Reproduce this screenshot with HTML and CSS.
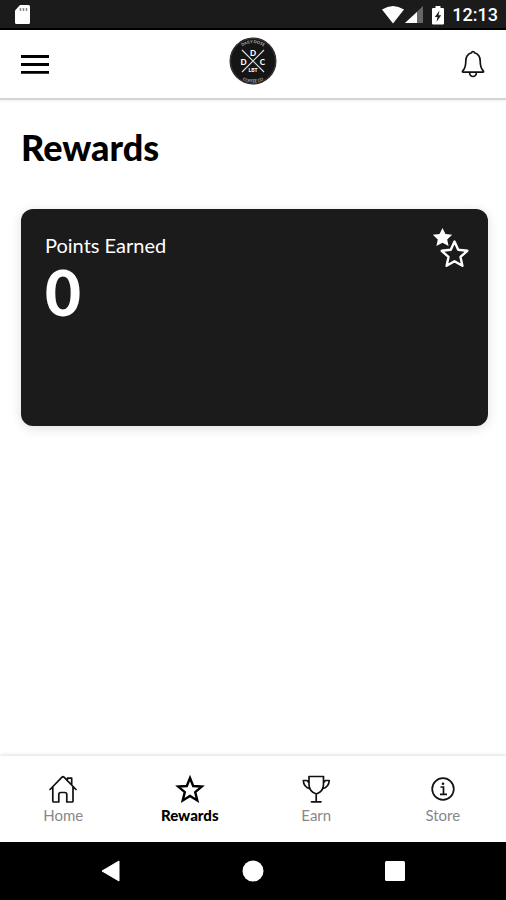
FILE: index.html
```html
<!DOCTYPE html>
<html lang="en">
<head>
<meta charset="utf-8">
<meta name="viewport" content="width=device-width, initial-scale=1">
<title>Rewards</title>
<link rel="stylesheet" href="styles.css">
</head>
<body>
<div class="status">
  <svg class="sd" width="18" height="20" viewBox="0 0 18 20" aria-hidden="true"><path d="M7 0h8.500q1.500 0 1.500 1.500v16q0 1.500-1.500 1.500h-12q-1.500 0-1.500-1.500V5.500z" fill="#fff"/><path d="M7.500 3v3M10.500 3v3M13.500 3v3" stroke="#888" stroke-width="1.500"/></svg>
  <div class="status-right">
    <svg width="22" height="18" viewBox="0 0 22 18" aria-hidden="true"><path d="M0 3.500Q11-3.500 22 3.500L11 17.500z" fill="#fff"/></svg>
    <svg class="signal" width="18" height="18" viewBox="0 0 18 18" aria-hidden="true"><path d="M18 0v17H0z" fill="#666"/><path d="M12 6v11H0z" fill="#fff"/></svg>
    <svg class="battery" width="12" height="19" viewBox="0 0 12 19" aria-hidden="true"><path d="M3.500 0h5v2H11q1 0 1 1v14.500q0 1-1 1H1q-1 0-1-1V3q0-1 1-1h2.500z" fill="#fff"/><path d="M7.500 4.500L2.800 11h2.700l-1 5L9.200 9.300H6.500z" fill="#1c1b1c"/></svg>
    <span class="clock">12:13</span>
  </div>
</div>
<header class="header">
  <button class="icon-button menu" aria-label="Menu"><svg width="28" height="20" viewBox="0 0 28 20"><path d="M0 2.500h28M0 10.500h28M0 18.300h28" stroke="#000" stroke-width="2.800"/></svg></button>
  <svg class="logo" width="48" height="48" viewBox="0 0 48 48" role="img" aria-label="Daily Dose Coffee Co">
    <defs><path id="arc-top" d="M6 24a18 18 0 0 1 36 0"/><path id="arc-bottom" d="M2.500 24a21.500 21.500 0 0 0 43 0"/></defs>
    <circle cx="24" cy="24" r="23.500" fill="#151515"/>
    <circle cx="24" cy="24" r="22.500" fill="none" stroke="#555" stroke-width=".6"/>
    <path d="M13 13l22 22M35 13L13 35" stroke="#ddd" stroke-width="1.200"/>
    <g class="logo-ring"><text><textPath href="#arc-top" startOffset="50%">DAILY DOSE</textPath></text><text><textPath href="#arc-bottom" startOffset="50%">COFFEE CO</textPath></text></g>
    <g class="logo-letters"><text x="24" y="19">D</text><text x="14.500" y="27.500">D</text><text x="33.500" y="27.500">C</text><text class="logo-small" x="24" y="35">LBT</text></g>
  </svg>
  <button class="icon-button bell" aria-label="Notifications"><svg width="24" height="28" viewBox="0 0 24 28" fill="none" stroke="#111" stroke-width="1.700" stroke-linejoin="round"><path d="M12 1.500c-.8 0-1.400.6-1.500 1.300C6.700 4 4.800 7 4.800 11c0 5.500-1.200 8-3 9.700q-1 1.300.5 1.500h19.400q1.500-.2.500-1.500c-1.800-1.700-3-4.200-3-9.700 0-4-1.900-7-5.700-8.200C13.400 2.100 12.800 1.500 12 1.500z"/><path d="M8.500 22.500q.5 4 3.500 4t3.500-4"/></svg></button>
</header>
<main class="main">
  <h1 class="title">Rewards</h1>
  <section class="card">
    <div><h2 class="card-label">Points Earned</h2><p class="points">0</p></div>
    <svg class="stars" width="38" height="42" viewBox="0 0 38 42" aria-hidden="true"><path d="M10.500 0l3 6 6.700.8-5 4.600 1.400 6.600-6.100-3.300L4.400 18l1.400-6.600-5-4.600 6.700-.8z" fill="#fff"/><path d="M22.500 13.500l3.700 8.300 9.100 1-6.800 6.100 1.900 8.900-7.900-4.600-7.900 4.600 1.900-8.900-6.800-6.100 9.100-1z" fill="#1c1b1c" stroke="#fff" stroke-width="2.400" stroke-linejoin="round"/></svg>
  </section>
</main>
<nav class="tabs" aria-label="Main">
  <a class="tab" href="#home"><svg width="30" height="30" viewBox="0 0 30 30" fill="none" stroke="#111" stroke-width="1.700" stroke-linejoin="round" stroke-linecap="round"><path d="M2 15.500L14 3.200q1-.9 2 0L28 15.500M4.800 13v14q0 1 1 1h5V20.500q0-2 2-2h4q2 0 2 2V28h5.200q1 0 1-1V13M19.500 6V4.200h4.200V11"/></svg><span>Home</span></a>
  <a class="tab active" href="#rewards" aria-current="page"><svg width="30" height="30" viewBox="0 0 30 30"><path d="M15 4l3.200 8 8.600.600-6.600 5.500 2.100 8.400L15 22l-7.300 4.500 2.100-8.400-6.600-5.500 8.600-.600z" fill="none" stroke="#000" stroke-width="2.400"/></svg><span>Rewards</span></a>
  <a class="tab" href="#earn"><svg width="30" height="30" viewBox="0 0 30 30" fill="none" stroke="#111" stroke-width="1.700" stroke-linejoin="round" stroke-linecap="round"><path d="M8 2.500h14.500v8q0 7-7.200 9.500Q8 17.500 8 10.500zM15.200 20v7.500M10.500 27.800h9.500M7.700 8.300L6 6.500H2.300q.3 6.500 6.500 8.300M22.800 8.300l1.700-1.800h3.700q-.3 6.500-6.500 8.300"/></svg><span>Earn</span></a>
  <a class="tab" href="#store"><svg width="30" height="30" viewBox="0 0 30 30" fill="none" stroke="#111"><circle cx="15" cy="15" r="10.800" stroke-width="1.700"/><path d="M12.500 13h3v7M12 20.300h7" stroke-width="1.700"/><circle cx="15" cy="9.700" r="1.300" fill="#111" stroke="none"/></svg><span>Store</span></a>
</nav>
<div class="system">
  <button class="icon-button" aria-label="Back"><svg width="20" height="22" viewBox="0 0 20 22"><path d="M1 11L18 1v20z" fill="#fff" stroke="#fff" stroke-linejoin="round"/></svg></button>
  <button class="icon-button" aria-label="Home screen"><svg width="22" height="22" viewBox="0 0 22 22"><circle cx="11" cy="11" r="10.500" fill="#fff"/></svg></button>
  <button class="icon-button" aria-label="Recent apps"><svg width="20" height="20" viewBox="0 0 20 20"><rect width="20" height="20" rx="1.500" fill="#fff"/></svg></button>
</div>
</body>
</html>
```
FILE: styles.css
```css
* {
  box-sizing: border-box;
}

body {
  margin: 0;
  min-height: 100vh;
  display: flex;
  flex-direction: column;
  background: #fff;
  color: #000;
  font-family: Lato, sans-serif;
}

svg {
  display: block;
}

.status {
  height: 30px;
  padding: 2px 8px 0 13px;
  display: flex;
  align-items: center;
  justify-content: space-between;
  background: #1c1b1c;
  border-bottom: 2px solid #000;
}

.status-right {
  display: flex;
  align-items: center;
}

.signal {
  margin-left: 1px;
}

.battery {
  margin: 0 8px 0 9px;
}

.clock {
  color: #fff;
  font: 500 18px/26px Roboto, sans-serif;
}

.header {
  height: 70px;
  padding: 0 21px;
  display: grid;
  grid-template-columns: 1fr auto 1fr;
  align-items: center;
  border-bottom: 2px solid #d4d4d4;
  box-shadow: 0 1px 3px #0001;
}

.icon-button {
  padding: 0;
  border: 0;
  background: none;
  cursor: pointer;
}

.menu {
  justify-self: start;
}

.bell {
  justify-self: end;
}

.logo {
  margin-bottom: 6px;
}

.logo-ring {
  fill: #bbb;
  font-size: 4px;
  font-weight: 700;
  text-anchor: middle;
}

.logo-letters {
  fill: #fff;
  font-size: 8px;
  font-weight: 900;
  text-anchor: middle;
}

.logo-small {
  font-size: 5px;
}

.main {
  flex: 1;
  padding: 23px 18px 24px 21px;
}

.title {
  margin: 0 0 38px;
  font-size: 36px;
  line-height: 48px;
  font-weight: 900;
}

.card {
  display: flex;
  min-height: 217px;
  padding: 19px 18px 24px 24px;
  justify-content: space-between;
  align-items: flex-start;
  border-radius: 12px;
  background: #1c1b1c;
  color: #fff;
  box-shadow: 0 2px 12px #0002;
}

.card-label {
  margin: 0;
  font-size: 20px;
  line-height: 34px;
  font-weight: 400;
}

.points {
  margin: 0;
  font-size: 62px;
  line-height: 60px;
  font-weight: 900;
}

.tabs {
  height: 86px;
  padding-top: 18px;
  display: grid;
  grid-template-columns: repeat(4, 1fr);
  box-shadow: 0 -1px 4px #0002;
}

.tab {
  display: flex;
  flex-direction: column;
  align-items: center;
  color: #888;
  font-size: 15px;
  line-height: 22px;
  text-decoration: none;
}

.active {
  color: #000;
  font-weight: 900;
}

.system {
  height: 58px;
  padding: 0 40px;
  display: grid;
  grid-template-columns: repeat(3, 1fr);
  place-items: center;
  background: #000;
}
```
